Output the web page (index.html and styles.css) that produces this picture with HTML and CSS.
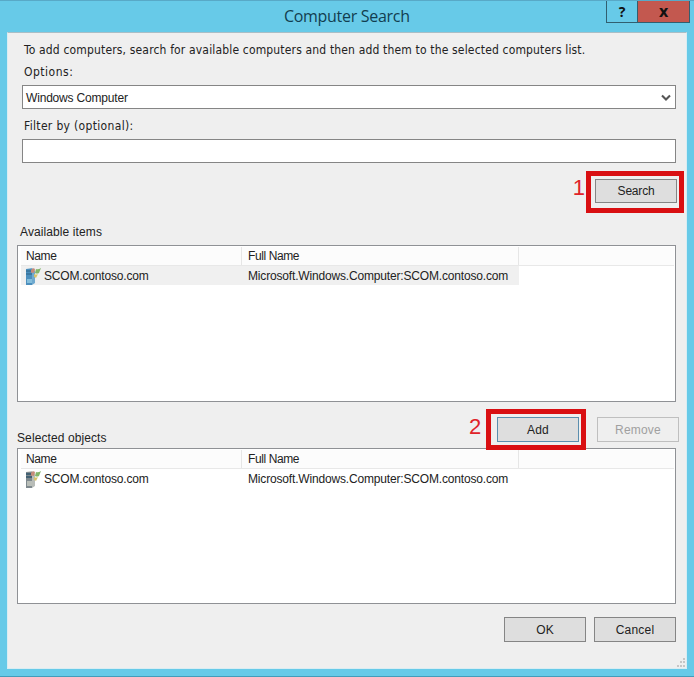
FILE: index.html
```html
<!DOCTYPE html>
<html lang="en">
<head>
<meta charset="utf-8">
<title>Computer Search</title>
<link rel="stylesheet" href="styles.css">
</head>
<body>
<svg class="defs" width="0" height="0" aria-hidden="true">
  <symbol id="flag" viewBox="0 0 16 18">
    <path d="M6 3Q8 0 10 2L9 6Q7 5 6 6Z" fill="#c78a78"/>
    <path d="M11 2Q13 3 16 1L14 6Q12 7 10 6Z" fill="#83b66a"/>
    <path d="M9 7Q11 8 13 7L11 11Q10 10 9 10Z" fill="#d9c36b"/>
  </symbol>
</svg>
<div class="window">
  <header class="titlebar">
    <h1 class="title"><span>Computer Search</span></h1>
    <div class="controls">
      <button class="help">?</button>
      <button class="close">x</button>
    </div>
  </header>
  <main class="client">
    <p class="intro"><span>To add computers, search for available computers and then add them to the selected computers list.</span></p>
    <label class="label options"><span>Options:</span></label>
    <div class="field combo"><span>Windows Computer</span>
      <svg width="10" height="8" viewBox="0 0 10 8"><path d="M1 1.5L5 5.5L9 1.5" fill="none" stroke="#555" stroke-width="2.1"/></svg>
    </div>
    <label class="label filter"><span>Filter by (optional):</span></label>
    <div class="field"></div>
    <div class="search-row">
      <span class="step">1</span>
      <div class="mark mark-search"><button class="btn"><span class="t-search">Search</span></button></div>
    </div>
    <h2 class="caption available"><span>Available items</span></h2>
    <section class="list">
      <div class="head"><span class="c1"><b>Name</b></span><span class="c2"><b>Full Name</b></span></div>
      <div class="row current">
        <span class="c1"><svg class="ico" width="16" height="18" viewBox="0 0 16 18"><path d="M1 2L7 1L10 4V16L7 18H1Z" fill="#6fa9cf"/><path d="M1 2H7V18H1Z" fill="#4c8fbd"/><path d="M1 4H7M1 7H7" stroke="#2d6285"/><path d="M2 12H7V16H2Z" fill="#83bddb"/><use href="#flag"/></svg><b>SCOM.contoso.com</b></span>
        <span class="c2"><b>Microsoft.Windows.Computer:SCOM.contoso.com</b></span>
      </div>
    </section>
    <div class="transfer">
      <h2 class="caption selected"><span>Selected objects</span></h2>
      <span class="step two">2</span>
      <div class="mark mark-add"><button class="btn focus"><span>Add</span></button></div>
      <button class="btn disabled"><span>Remove</span></button>
    </div>
    <section class="list second">
      <div class="head"><span class="c1"><b>Name</b></span><span class="c2"><b>Full Name</b></span></div>
      <div class="row">
        <span class="c1"><svg class="ico" width="16" height="18" viewBox="0 0 16 18"><path d="M1 2L7 1L10 4V16L7 18H1Z" fill="#b8bcb8"/><path d="M1 2H7V18H1Z" fill="#7f898e"/><path d="M1 4H7M1 7H7" stroke="#31546b" stroke-width="1.5"/><path d="M2 11H7V16H2Z" fill="#b9beb8"/><use href="#flag"/></svg><b>SCOM.contoso.com</b></span>
        <span class="c2"><b>Microsoft.Windows.Computer:SCOM.contoso.com</b></span>
      </div>
    </section>
    <footer class="footer">
      <button class="btn"><span>OK</span></button>
      <button class="btn"><span>Cancel</span></button>
    </footer>
    <svg class="grip" width="10" height="10" viewBox="0 0 10 10"><path d="M7 0h2v2h-2zM4 3h2v2h-2zM7 3h2v2h-2zM1 7h2v2h-2zM4 7h2v2h-2zM7 7h2v2h-2z" fill="#c6c6c6"/></svg>
  </main>
</div>
</body>
</html>
```

FILE: styles.css
```css
* { box-sizing: border-box; }
body { margin: 0; font: 12px/16px "Liberation Sans", Arial, sans-serif; color: #222; background: #67cae8; }
h1, h2, p { margin: 0; font-weight: normal; }
b { font-weight: normal; }
button { margin: 0; padding: 0; font: inherit; color: inherit; }
span, b { white-space: nowrap; }
.defs { position: absolute; }

.window { width: 694px; height: 677px; padding: 0 7px 7px; background: #67cae8; border-top: 1px solid #58a9c7; border-bottom: 1px solid #439cba; display: flex; flex-direction: column; }
.titlebar { height: 31px; flex: none; display: flex; justify-content: space-between; }
.title { margin-left: 277px; padding-top: 3px; font: 16px/24px "Open Sans", sans-serif; color: #123e50; letter-spacing: -0.3px; }
.controls { display: flex; height: 22px; margin-right: -3px; border: 1px solid #315f70; border-top: 0; }
.controls button { border: 0; font: bold 14px/20px "Open Sans", sans-serif; color: #111; }
.controls .help { width: 31px; background: #67cae8; border-right: 1px solid #315f70; }
.controls .close { width: 51px; background: #c3584f; font-size: 16px; padding-bottom: 2px; }

.client { flex: 1; position: relative; background: #efefef; border: 1px solid #d9edf3; border-top-color: #a9bec6; padding: 0 10px 0 9px; display: flex; flex-direction: column; }
.intro, .label { font: 12px/16px "DejaVu Sans Condensed", "DejaVu Sans", sans-serif; padding-left: 7px; height: 16px; }
.intro { margin-top: 9px; letter-spacing: 0.16px; }
.options { margin-top: 6px; letter-spacing: 0.5px; }
.filter { margin: 9px 0 5px; letter-spacing: 0.33px; }
.field { margin-left: 5px; height: 24px; border: 1px solid #858585; background: #fff; }
.combo { margin-top: 5px; display: flex; align-items: center; justify-content: space-between; padding: 1px 4px 0 3px; letter-spacing: -0.18px; }

.step { font-size: 22px; line-height: 22px; color: #e02329; }
.mark { border: 5px solid #d90f12; display: flex; align-items: flex-start; }
.btn { width: 82px; height: 25px; border: 1px solid #858585; background: #dedede; flex: none; display: flex; align-items: center; justify-content: center; letter-spacing: 0.2px; }
.btn.focus { border-color: #5b8eae; }
.btn.disabled { background: #efefef; border-color: #bfbfbf; color: #a0a0a0; margin-top: 15px; }
.t-search { letter-spacing: -0.2px; }
.search-row { display: flex; justify-content: flex-end; margin: 8px -8px 0 0; height: 42px; }
.search-row .step { margin: 6px 1px 0 0; }
.mark-search { width: 98px; height: 42px; padding: 3px 0 0 4px; }
.mark-search .btn { height: 24px; }

.caption { font-size: 12px; line-height: 16px; letter-spacing: 0.1px; }
.available { margin-top: 11px; padding-left: 3px; }
.list { margin-top: 5px; height: 157px; border: 1px solid #8f9195; background: #fff; padding: 1px; flex: none; }
.head, .row { display: flex; height: 19px; align-items: center; }
.head { background: #fcfcfc; border-bottom: 1px solid #e8e8e8; margin-left: 2px; letter-spacing: -0.4px; }
.head span { height: 18px; border-right: 1px solid #e6e6e6; display: flex; align-items: center; }
.c1 { width: 221px; display: flex; align-items: center; flex: none; }
.head .c1 { padding-left: 5px; }
.c2 { width: 277px; padding-left: 6px; flex: none; }
.row { margin-left: 2px; width: 498px; letter-spacing: -0.17px; }
.row.current { background: #f0f0f0; }
.ico { margin: 0 3px 0 4px; flex: none; }

.transfer { height: 46px; display: flex; align-items: flex-start; flex: none; margin-right: -2px; }
.selected { margin-top: 28px; width: 452px; flex: none; }
.step.two { margin-top: 14px; width: 17px; flex: none; }
.mark-add { margin: 7px 11px 0 0; width: 100px; height: 41px; padding: 3px 0 0 6px; flex: none; position: relative; z-index: 1; }
.list.second { margin-top: 0; height: 156px; }
.footer { display: flex; gap: 8px; justify-content: flex-end; margin-top: 13px; }
.grip { position: absolute; right: 0; bottom: 0; }
```
